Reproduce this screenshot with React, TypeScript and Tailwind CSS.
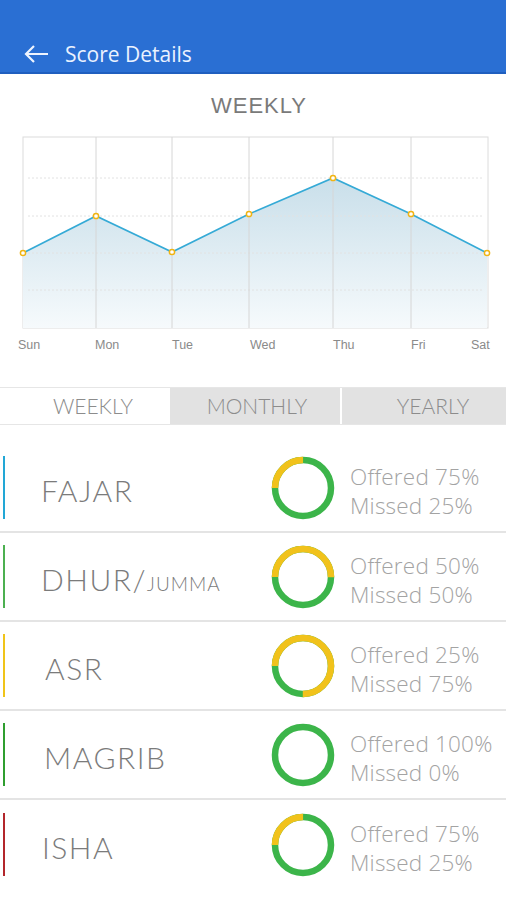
import React from 'react';

const days = [
  { name: 'Sun', x: 23, y: 117, lx: 18 },
  { name: 'Mon', x: 96, y: 80, lx: 95 },
  { name: 'Tue', x: 172, y: 116, lx: 172 },
  { name: 'Wed', x: 249, y: 78, lx: 250 },
  { name: 'Thu', x: 333, y: 42, lx: 333 },
  { name: 'Fri', x: 411, y: 78, lx: 411 },
  { name: 'Sat', x: 487, y: 117, lx: 471 },
];

interface Prayer {
  name: string;
  sub?: string;
  offered: number;
  bar: string;
  indent: string;
}

const prayers: Prayer[] = [
  { name: 'FAJAR', offered: 75, bar: 'bg-[#22a7d6]', indent: 'pl-[36px]' },
  { name: 'DHUR/', sub: 'JUMMA', offered: 50, bar: 'bg-[#4cb050]', indent: 'pl-[36px]' },
  { name: 'ASR', offered: 25, bar: 'bg-[#f0c419]', indent: 'pl-[40px]' },
  { name: 'MAGRIB', offered: 100, bar: 'bg-[#2f9e2f]', indent: 'pl-[39px]' },
  { name: 'ISHA', offered: 75, bar: 'bg-[#b3262b]', indent: 'pl-[37px]' },
];

function Donut({ offered }: { offered: number }) {
  const r = 28;
  const c = 2 * Math.PI * r;
  const missed = 100 - offered;
  // missed (yellow) starts at 9 o'clock and runs clockwise
  return (
    <svg width="64" height="64" viewBox="0 0 64 64" className="shrink-0">
      <circle cx="32" cy="32" r={r} fill="none" stroke="#3cb54a" strokeWidth="6.5" />
      {missed > 0 && (
        <circle
          cx="32"
          cy="32"
          r={r}
          fill="none"
          stroke="#f1c21b"
          strokeWidth="6.5"
          strokeDasharray={`${(c * missed) / 100} ${c}`}
          transform="rotate(180 32 32)"
        />
      )}
    </svg>
  );
}

function Chart() {
  const line = days.map((d) => `${d.x},${d.y}`).join(' ');
  const area = `23,192 ${line} 487,192`;
  return (
    <svg width="506" height="251" viewBox="0 0 506 251" className="block">
      <defs>
        <linearGradient id="fillGrad" x1="0" y1="0" x2="0" y2="1">
          <stop offset="0%" stopColor="#c9dfea" />
          <stop offset="100%" stopColor="#f6fafc" />
        </linearGradient>
      </defs>
      <rect x="23" y="1" width="465" height="191" fill="#fff" stroke="#dcdcdc" strokeWidth="1" />
      <polygon points={area} fill="url(#fillGrad)" />
      {[42, 80, 117, 154].map((y) => (
        <line key={y} x1="28" x2="484" y1={y} y2={y} stroke="#e2e2e2" strokeWidth="1" strokeDasharray="2 2" />
      ))}
      {days.slice(1, 6).map((d) => (
        <line key={d.name} x1={d.x} x2={d.x} y1="1" y2="192" stroke="#d6d6d6" strokeWidth="1" />
      ))}
      <polyline points={line} fill="none" stroke="#35aad6" strokeWidth="1.6" />
      {days.map((d) => (
        <circle key={d.name} cx={d.x} cy={d.y} r="2.6" fill="#fff" stroke="#f0b414" strokeWidth="1.5" />
      ))}
      {days.map((d) => (
        <text
          key={d.name}
          x={d.lx}
          y="213"
          fontSize="12.5"
          fill="#8a8a8a"
          fontFamily="'Liberation Sans', Arial, sans-serif"
        >
          {d.name}
        </text>
      ))}
    </svg>
  );
}

export default function App() {
  return (
    <div className="w-[506px] h-[900px] bg-white overflow-hidden font-['Open_Sans',sans-serif]">
      <div className="h-[74px] bg-[#2a6fd3] border-b-2 border-[#1f5fbf] flex items-end pb-[7px]">
        <svg width="26" height="20" viewBox="0 0 26 20" className="ml-[23px] mb-[1px]" fill="none" stroke="#eef4ff" strokeWidth="2.2">
          <path d="M25 10H3M11 2L3 10l8 8" />
        </svg>
        <span className="ml-[16px] text-[21px] text-[#eaf2ff] leading-none">Score Details</span>
      </div>

      <div className="h-[62px] flex items-center justify-center pl-[12px]">
        <span className="text-[22px] text-[#7a7a7a] font-['Liberation_Sans',sans-serif] tracking-[1px]">WEEKLY</span>
      </div>

      <Chart />

      <div className="flex h-[38px] border-y border-[#e6e6e6] text-[21px] text-[#8c8c8c] font-['Lato',sans-serif] font-light">
        <div className="w-[170px] bg-white flex items-center justify-center pl-[16px]">WEEKLY</div>
        <div className="w-[170px] bg-[#e2e2e2] flex items-center justify-center pl-[4px]">MONTHLY</div>
        <div className="flex-1 bg-[#e2e2e2] ml-[2px] flex items-center justify-center pl-[18px]">YEARLY</div>
      </div>

      <div className="mt-[19px]">
        {prayers.map((p, i) => (
          <div
            key={p.name}
            className={`h-[89px] flex items-center ${i < prayers.length - 1 ? 'border-b-2 border-[#e4e4e4]' : ''}`}
          >
            <div className={`w-[2px] h-[63px] ml-[3px] ${p.bar}`} />
            <div className={`w-[266px] ${p.indent} pt-[6px] text-[30px] text-[#7b7b7b] font-['Lato',sans-serif] font-light tracking-[1.5px]`}>
              {p.name}
              {p.sub && <span className="text-[19px] tracking-[1px]">{p.sub}</span>}
            </div>
            <Donut offered={p.offered} />
            <div className="ml-[15px] pt-[6px] text-[22.5px] leading-[29px] text-[#a3a3a3] font-light tracking-[0.2px]">
              <div>Offered {p.offered}%</div>
              <div>Missed {100 - p.offered}%</div>
            </div>
          </div>
        ))}
      </div>
    </div>
  );
}
